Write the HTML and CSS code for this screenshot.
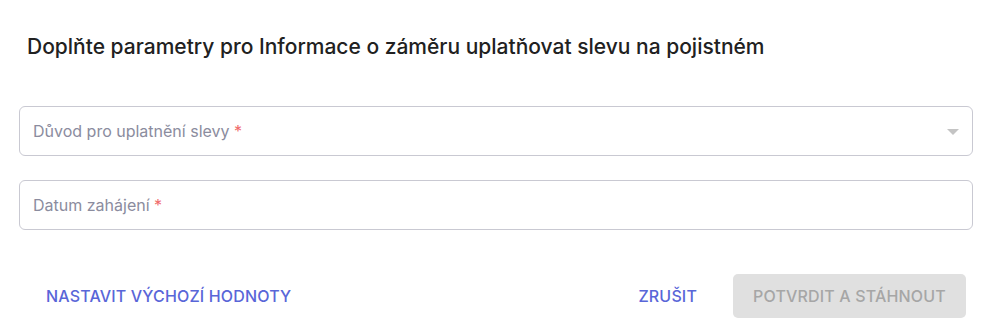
FILE: index.html
```html
<!DOCTYPE html>
<html lang="cs">
<head>
<meta charset="utf-8">
<title>Doplňte parametry</title>
<link rel="stylesheet" href="styles.css">
</head>
<body>
<div class="dialog">
  <h2 class="title">Doplňte parametry pro Informace o záměru uplatňovat slevu na pojistném</h2>
  <div class="fields">
    <div class="field select">
      <span class="label">Důvod pro uplatnění slevy <span class="req">*</span></span>
      <svg class="arrow" width="12" height="6" viewBox="0 0 12 6"><path d="M0 0 L12 0 L6 6 Z" fill="#c4c4c4"/></svg>
    </div>
    <div class="field">
      <span class="label">Datum zahájení <span class="req">*</span></span>
    </div>
  </div>
  <div class="actions">
    <button class="btn text">NASTAVIT VÝCHOZÍ HODNOTY</button>
    <div class="right">
      <button class="btn text">ZRUŠIT</button>
      <button class="btn primary" disabled>POTVRDIT A STÁHNOUT</button>
    </div>
  </div>
</div>
</body>
</html>
```
FILE: styles.css
```css
* { box-sizing: border-box; }
html, body { margin: 0; padding: 0; background: #fff; }
body { font-family: Inter, Roboto, sans-serif; }
.dialog { width: 991px; padding: 33px 18px 0 19px; }
.title {
  margin: 0 0 0 8px;
  font-size: 21px;
  line-height: 28px;
  font-weight: 500;
  color: #212121;
}
.fields { margin-top: 45px; display: flex; flex-direction: column; gap: 24px; }
.field {
  height: 50px;
  border: 1px solid #c9c9d2;
  border-radius: 6px;
  display: flex;
  align-items: center;
  justify-content: space-between;
  padding: 0 13px;
}
.label { font-size: 16px; color: #8b8c9e; }
.req { color: #f06a6a; }
.arrow { margin-top: 2px; }
.actions {
  margin-top: 44px;
  display: flex;
  justify-content: space-between;
  align-items: center;
  padding: 0 7px 0 11px;
}
.right { display: flex; gap: 20px; align-items: center; }
.btn {
  font-family: Inter, Roboto, sans-serif;
  font-size: 16px;
  font-weight: 500;
  letter-spacing: 0.01em;
  height: 44px;
  border: none;
  border-radius: 5px;
  background: transparent;
  padding: 0 16px;
  cursor: pointer;
}
.text { color: #5966d8; }
.primary {
  background: #e0e0e0;
  color: #a6a6a6;
  padding: 0 20px;
  width: 233px;
}
```
